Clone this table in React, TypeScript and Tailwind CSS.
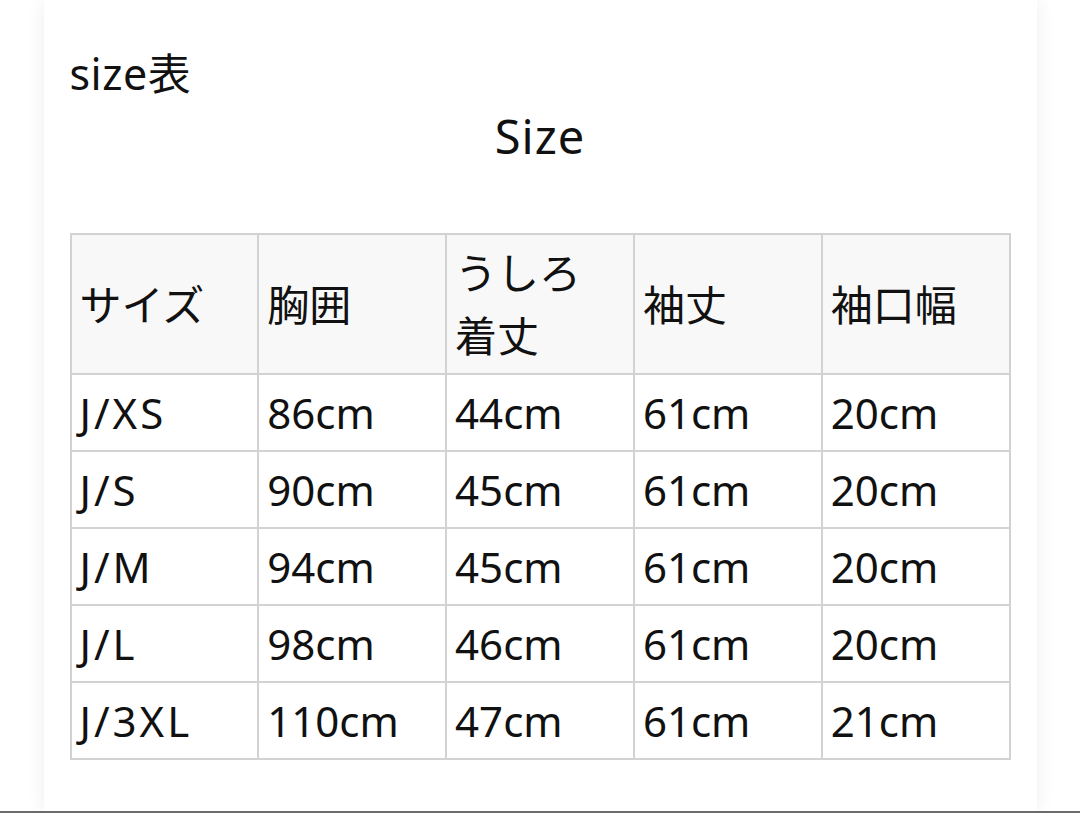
import React from "react";

const rows = [
  ["J/XS", "86cm", "44cm", "61cm", "20cm"],
  ["J/S", "90cm", "45cm", "61cm", "20cm"],
  ["J/M", "94cm", "45cm", "61cm", "20cm"],
  ["J/L", "98cm", "46cm", "61cm", "20cm"],
  ["J/3XL", "110cm", "47cm", "61cm", "21cm"],
];

export default function App() {
  return (
    <div
      className="w-[1080px] h-[813px] bg-white overflow-hidden flex flex-col text-[#111]"
      style={{ fontFamily: '"Noto Sans", "Noto Sans CJK JP", sans-serif' }}
    >
      <div className="flex-1 flex justify-center">
        <div className="w-[993px] bg-white shadow-[0_0_18px_rgba(0,0,0,0.07)] px-[26px] pt-[46px]">
          <p className="text-[43px] leading-[56px] tracking-[0.5px]">size表</p>

          <h3 className="text-[47px] leading-[60px] tracking-[1px] text-center mt-[4px] mb-[67px]">
            Size
          </h3>

          <table className="w-[941px] table-fixed border-collapse text-[42px] leading-[63px]">
            <thead>
              <tr className="bg-[#f8f8f8]">
                <th className="border-2 border-[#d2d2d2] px-[8px] py-[6px] text-left font-normal align-middle">サイズ</th>
                <th className="border-2 border-[#d2d2d2] px-[8px] py-[6px] text-left font-normal align-middle">胸囲</th>
                <th className="border-2 border-[#d2d2d2] px-[8px] py-[6px] text-left font-normal align-middle">
                  うしろ
                  <br />
                  着丈
                </th>
                <th className="border-2 border-[#d2d2d2] px-[8px] py-[6px] text-left font-normal align-middle">袖丈</th>
                <th className="border-2 border-[#d2d2d2] px-[8px] py-[6px] text-left font-normal align-middle">袖口幅</th>
              </tr>
            </thead>
            <tbody>
              {rows.map((r) => (
                <tr key={r[0]}>
                  {r.map((c, i) =>
                    i === 0 ? (
                      <td key={i} className="border-2 border-[#d2d2d2] px-[8px] py-[6px] tracking-[3px]">
                        {c}
                      </td>
                    ) : (
                      <td key={i} className="border-2 border-[#d2d2d2] px-[8px] py-[6px]">
                        {c}
                      </td>
                    )
                  )}
                </tr>
              ))}
            </tbody>
          </table>
        </div>
      </div>
      <div className="h-[2px] bg-[#6b6b6b]"></div>
    </div>
  );
}
